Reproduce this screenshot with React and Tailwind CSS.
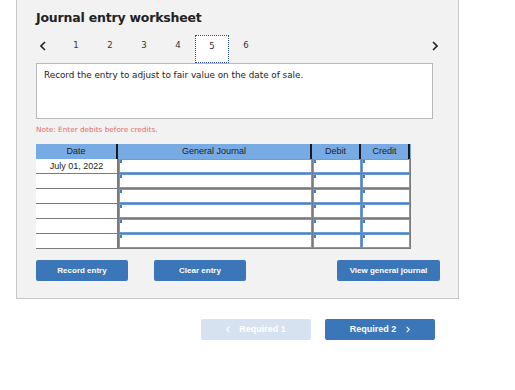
import React from 'react';

const rows = ['July 01, 2022', '', '', '', '', ''];

function Chevron({ dir = 'left', className = '' }) {
    const d = dir === 'left' ? 'M5 1L1 5l4 4' : 'M1 1l4 4-4 4';
    return (
        <svg width="6" height="10" viewBox="0 0 6 10" className={className} fill="none" stroke="currentColor" strokeWidth="1.6">
            <path d={d} />
        </svg>
    );
}

function InputCell({ width }) {
    return (
        <div className={`${width} relative bg-white border border-[#6e9dd6] mb-[1px] ml-[1px]`}>
            <span className="absolute left-0 top-0 w-[2px] h-[3px] bg-[#3f7fd0]" />
        </div>
    );
}

export default function App() {
    return (
        <div className="w-[515px] h-[390px] bg-white font-['DejaVu_Sans',sans-serif] text-[#222]">
            <div className="ml-4 w-[443px] h-[299px] bg-[#f2f2f2] border-x border-b border-[#c8c8c8] pl-[19px] pt-[10px]">
                <h1 className="text-[12.5px] tracking-[-0.2px] font-bold leading-[16px] text-[#222]">Journal entry worksheet</h1>

                <div className="mt-[9px] flex h-[28px] w-[402px]">
                    <div className="w-[23px] pl-[4px] pt-[6px] text-[#222]">
                        <Chevron dir="left" />
                    </div>
                    {[1, 2, 3, 4, 5, 6].map((n) => (
                        <div
                            key={n}
                            className={`w-[34px] flex justify-center pt-[5px] text-[8.5px] leading-[10px] text-[#333] ${n === 5 ? 'bg-white border border-dotted border-[#2d4f8f]' : ''}`}
                        >
                            {n}
                        </div>
                    ))}
                    <div className="flex-1" />
                    <div className="pt-[6px] text-[#222]">
                        <Chevron dir="right" />
                    </div>
                </div>

                <div className="w-[397px] h-[56px] bg-white border border-[#b8b8b8] px-[7px] pt-[5px] text-[8.8px] leading-[12px] text-[#222]">
                    Record the entry to adjust to fair value on the date of sale.
                </div>

                <p className="mt-[5px] text-[7.3px] leading-[11px] text-[#e0706a]">Note: Enter debits before credits.</p>

                <div className="mt-[9px] w-[375px] font-['Liberation_Sans',sans-serif] text-[9px] text-[#222]">
                    <div className="flex h-[15px] bg-[#78aae4] leading-[15px]">
                        <div className="w-[82px] text-center border-r-2 border-[#1a1a1a]">Date</div>
                        <div className="w-[194px] text-center border-r-2 border-[#1a1a1a]">General Journal</div>
                        <div className="w-[49px] text-center border-r-2 border-[#1a1a1a]">Debit</div>
                        <div className="w-[49px] text-center border-r-2 border-[#1a1a1a]">Credit</div>
                    </div>
                    {rows.map((date, i) => (
                        <div key={i} className="flex h-[15px] bg-[#7a7a7a]">
                            <div className="w-[81px] mb-[1px] bg-white text-center leading-[14px]">{date}</div>
                            <div className="w-[1px]" />
                            <InputCell width="w-[193px]" />
                            <InputCell width="w-[48px]" />
                            <InputCell width="w-[48px]" />
                        </div>
                    ))}
                </div>

                <div className="mt-[11px] flex font-['Liberation_Sans',sans-serif] text-[8px] font-bold text-white">
                    <button className="w-[92px] h-[21px] rounded-[2px] bg-[#3b76b8]">Record entry</button>
                    <button className="ml-[26px] w-[92px] h-[21px] rounded-[2px] bg-[#3b76b8]">Clear entry</button>
                    <button className="ml-[91px] w-[103px] h-[21px] rounded-[2px] bg-[#3b76b8]">View general journal</button>
                </div>
            </div>

            <div className="mt-[20px] flex pl-[201px] gap-[14px] font-['Liberation_Sans',sans-serif] text-[9px] font-bold text-white">
                <button className="w-[110px] h-[21px] rounded-[2px] bg-[#d6e2f0] flex items-center justify-center gap-[9px]">
                    <Chevron dir="left" className="w-[4px] h-[7px]" />
                    <span>Required 1</span>
                </button>
                <button className="w-[110px] h-[21px] rounded-[2px] bg-[#3b76b8] flex items-center justify-center gap-[10px]">
                    <span>Required 2</span>
                    <Chevron dir="right" className="w-[4px] h-[7px]" />
                </button>
            </div>
        </div>
    );
}
